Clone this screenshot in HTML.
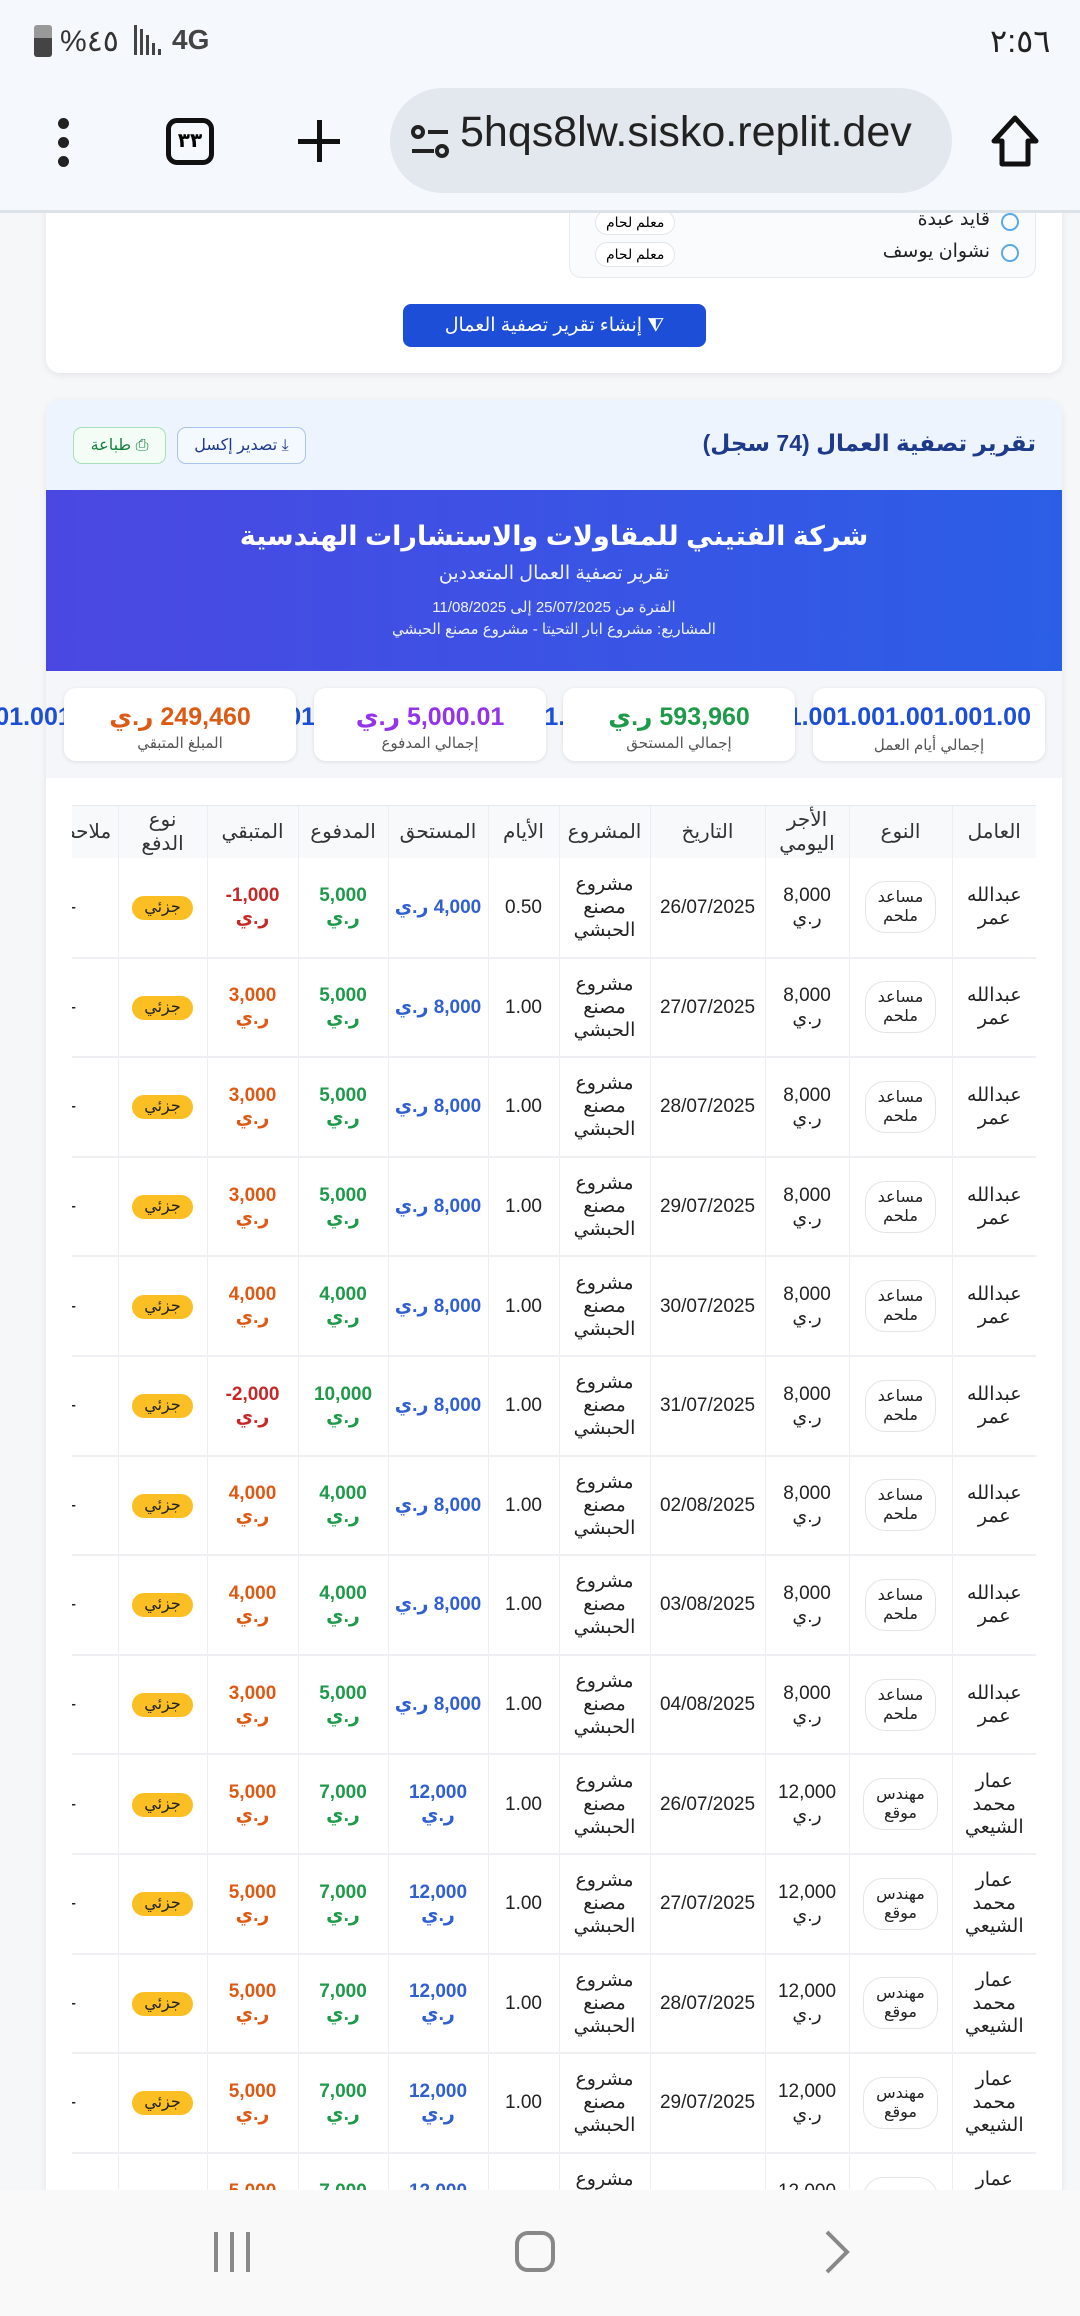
<!DOCTYPE html>
<html lang="ar">
<head>
<meta charset="utf-8">
<style>
*{box-sizing:border-box;margin:0;padding:0}
html,body{width:1080px;height:2316px;overflow:hidden;background:#f6f7f9;font-family:"Liberation Sans","DejaVu Sans",sans-serif;}
.abs{position:absolute}
#status{left:0;top:0;width:1080px;height:213px;background:#f5f8fd;border-bottom:3px solid #dde2e8;z-index:10;overflow:hidden}
.url{left:390px;top:88px;width:562px;height:105px;border-radius:53px;background:#e3e8ef;overflow:hidden}
.card{background:#fff;border-radius:14px;box-shadow:0 2px 8px rgba(0,0,0,.08)}
.rtl{direction:rtl}
table{border-collapse:collapse;table-layout:fixed;direction:rtl}
td,th{text-align:center;vertical-align:middle;font-size:19px;line-height:23px;color:#222;border-left:1px solid #eceef2;}
th{font-weight:normal;color:#333;height:52px;background:#f7f9fb;font-size:20px;line-height:24px}
tr.r td{height:99.6px;border-bottom:2px solid #eef0f4}
.pill{display:inline-block;border:1px solid #e3e5e9;border-radius:20px;padding:6px 12px;font-size:16px;line-height:19px;background:#fff}
.b{font-weight:bold}
.blue{color:#2f5fd0}.green{color:#1f9a4a}.red{color:#c62828}.org{color:#dd5a14}
.badge{display:inline-block;background:#fbbf24;border-radius:13px;padding:2px 12px;font-size:16px;line-height:20px;color:#222}
.stat{position:absolute;top:17px;width:232px;height:73px;background:#fff;border-radius:12px;box-shadow:0 1px 4px rgba(0,0,0,.1);text-align:center}
.stat .v{font-size:25px;font-weight:bold;line-height:30px;margin-top:14px;white-space:nowrap}
.stat .l{font-size:15px;color:#555;line-height:20px;margin-top:2px}
</style>
</head>
<body>
<div id="status" class="abs">
  <div class="abs" style="left:34px;top:25px;width:18px;height:32px;border-radius:3px;background:linear-gradient(#999 0 40%,#444 40%)"></div>
  <div class="abs" style="left:60px;top:24px;font-size:30px;color:#333">%٤٥</div>
  <svg class="abs" style="left:133px;top:25px" width="32" height="32"><g fill="#444"><rect x="1" y="0" width="3" height="30"/><rect x="7" y="4" width="3" height="26"/><rect x="13" y="10" width="3" height="20"/><rect x="19" y="18" width="3" height="12"/><rect x="25" y="24" width="3" height="6"/></g></svg>
  <div class="abs" style="left:172px;top:24px;font-size:28px;font-weight:bold;color:#444">4G</div>
  <div class="abs" style="left:990px;top:22px;font-size:32px;color:#222">٢:٥٦</div>
  <div class="abs" style="left:58px;top:118px;width:11px;height:11px;border-radius:50%;background:#222;box-shadow:0 19px 0 #222,0 38px 0 #222"></div>
  <div class="abs" style="left:166px;top:118px;width:48px;height:47px;border:5px solid #111;border-radius:11px;font-size:20px;text-align:center;line-height:36px;font-weight:bold">٣٣</div>
  <div class="abs" style="left:298px;top:139px;width:42px;height:5px;background:#111"></div>
  <div class="abs" style="left:317px;top:120px;width:5px;height:42px;background:#111"></div>
  <div class="abs url">
    <svg class="abs" style="left:20px;top:37px" width="42" height="34"><g stroke="#222" stroke-width="4" fill="none"><circle cx="8" cy="7" r="5"/><line x1="18" y1="7" x2="38" y2="7"/><circle cx="32" cy="26" r="5"/><line x1="2" y1="26" x2="24" y2="26"/></g></svg>
    <div class="abs" style="left:70px;top:20px;font-size:43px;color:#222;white-space:nowrap">5hqs8lw.sisko.replit.dev</div>
  </div>
  <svg class="abs" style="left:990px;top:115px" width="50" height="52"><path d="M4 26 L25 3 L46 26 L38 26 L38 49 L12 49 L12 26 Z" fill="none" stroke="#111" stroke-width="5" stroke-linejoin="round"/></svg>
</div>

<div class="abs card" style="left:46px;top:150px;width:1016px;height:223px"></div>
<div class="abs" style="left:569px;top:190px;width:467px;height:88px;border:1px solid #e6e9ee;border-top:none;border-radius:0 0 12px 12px;background:#fafbfc"></div>
<div class="abs rtl" style="left:620px;top:208px;width:370px;font-size:19px;text-align:right;color:#222">قايد عبدة</div>
<div class="abs rtl" style="left:620px;top:240px;width:370px;font-size:19px;text-align:right;color:#222">نشوان يوسف</div>
<div class="abs" style="left:1001px;top:213px;width:18px;height:18px;border:2px solid #5aa9e6;border-radius:50%"></div>
<div class="abs" style="left:1001px;top:244px;width:18px;height:18px;border:2px solid #5aa9e6;border-radius:50%"></div>
<div class="abs pill rtl" style="left:595px;top:210px;padding:2px 10px;font-size:14px">معلم لحام</div>
<div class="abs pill rtl" style="left:595px;top:242px;padding:2px 10px;font-size:14px">معلم لحام</div>
<div class="abs rtl" style="left:403px;top:304px;width:303px;height:43px;background:#1d4ed8;border-radius:8px;color:#fff;font-size:19px;line-height:43px;text-align:center">⧩ إنشاء تقرير تصفية العمال</div>

<div class="abs card" style="left:46px;top:400px;width:1016px;height:1900px;overflow:hidden">
  <div class="abs" style="left:0;top:0;width:1016px;height:90px;background:#eef4fd"></div>
  <div class="abs rtl b" style="right:26px;top:30px;font-size:23px;color:#1e3a8a">تقرير تصفية العمال (74 سجل)</div>
  <div class="abs rtl" style="left:131px;top:27px;width:129px;height:37px;border:1px solid #a9c2ee;border-radius:9px;background:#f4f8ff;color:#1e3a8a;font-size:16px;line-height:35px;text-align:center">⤓ تصدير إكسل</div>
  <div class="abs rtl" style="left:27px;top:27px;width:93px;height:37px;border:1px solid #a9e0bb;border-radius:9px;background:#f4fcf6;color:#15803d;font-size:16px;line-height:35px;text-align:center">⎙ طباعة</div>
  <div class="abs rtl" style="left:0;top:90px;width:1016px;height:181px;background:linear-gradient(to left,#2b5ee6,#4b48e2);color:#fff;text-align:center">
    <div class="b" style="font-size:27px;margin-top:28px;line-height:36px">شركة الفتيني للمقاولات والاستشارات الهندسية</div>
    <div style="font-size:19px;margin-top:8px;opacity:.92">تقرير تصفية العمال المتعددين</div>
    <div style="font-size:15px;margin-top:12px;line-height:22px;opacity:.92">الفترة من 25/07/2025 إلى 11/08/2025</div>
    <div style="font-size:15px;line-height:22px;opacity:.92">المشاريع: مشروع ابار التحيتا - مشروع مصنع الحبشي</div>
  </div>
  <div class="abs" style="left:0;top:271px;width:1016px;height:107px;background:#f4f6f9"></div>
</div>

<div class="abs" style="left:0;top:671px;width:1080px;height:107px;overflow:hidden">
<div class="stat" style="left:813px;z-index:1;overflow:visible"><div class="v" style="position:absolute;right:14px;top:0;color:#1d4ed8">1.000.501.001.001.001.001.001.001.001.001.001.001.001.001.001.001.001.001.001.001.001.001.001.001.00</div><div class="l rtl" style="margin-top:48px">إجمالي أيام العمل</div></div>
<div class="stat rtl" style="left:563px;z-index:2"><div class="v green">593,960 ر.ي</div><div class="l">إجمالي المستحق</div></div>
<div class="stat rtl" style="left:314px;z-index:3"><div class="v" style="color:#9333ea">5,000.01 ر.ي</div><div class="l">إجمالي المدفوع</div></div>
<div class="stat rtl" style="left:64px;z-index:4"><div class="v org">249,460 ر.ي</div><div class="l">المبلغ المتبقي</div></div>
</div>

<div class="abs rtl" style="left:72px;top:805px;width:964px;height:1400px;overflow:hidden;border-top:1px solid #e5e8ec">
<table style="width:1008px">
<colgroup><col style="width:84px"><col style="width:103px"><col style="width:84px"><col style="width:115px"><col style="width:91px"><col style="width:71px"><col style="width:100px"><col style="width:90px"><col style="width:91px"><col style="width:89px"><col style="width:90px"></colgroup>
<tr><th>العامل</th><th>النوع</th><th>الأجر<br>اليومي</th><th>التاريخ</th><th>المشروع</th><th>الأيام</th><th>المستحق</th><th>المدفوع</th><th>المتبقي</th><th>نوع<br>الدفع</th><th>ملاحظات</th></tr>
<tr class="r"><td>عبدالله<br>عمر</td><td><span class="pill">مساعد<br>ملحم</span></td><td>8,000<br>ر.ي</td><td>26/07/2025</td><td>مشروع<br>مصنع<br>الحبشي</td><td>0.50</td><td class="b blue">4,000 ر.ي</td><td class="b green">5,000<br>ر.ي</td><td class="b red">1,000-<br>ر.ي</td><td><span class="badge">جزئي</span></td><td>-</td></tr>
<tr class="r"><td>عبدالله<br>عمر</td><td><span class="pill">مساعد<br>ملحم</span></td><td>8,000<br>ر.ي</td><td>27/07/2025</td><td>مشروع<br>مصنع<br>الحبشي</td><td>1.00</td><td class="b blue">8,000 ر.ي</td><td class="b green">5,000<br>ر.ي</td><td class="b org">3,000<br>ر.ي</td><td><span class="badge">جزئي</span></td><td>-</td></tr>
<tr class="r"><td>عبدالله<br>عمر</td><td><span class="pill">مساعد<br>ملحم</span></td><td>8,000<br>ر.ي</td><td>28/07/2025</td><td>مشروع<br>مصنع<br>الحبشي</td><td>1.00</td><td class="b blue">8,000 ر.ي</td><td class="b green">5,000<br>ر.ي</td><td class="b org">3,000<br>ر.ي</td><td><span class="badge">جزئي</span></td><td>-</td></tr>
<tr class="r"><td>عبدالله<br>عمر</td><td><span class="pill">مساعد<br>ملحم</span></td><td>8,000<br>ر.ي</td><td>29/07/2025</td><td>مشروع<br>مصنع<br>الحبشي</td><td>1.00</td><td class="b blue">8,000 ر.ي</td><td class="b green">5,000<br>ر.ي</td><td class="b org">3,000<br>ر.ي</td><td><span class="badge">جزئي</span></td><td>-</td></tr>
<tr class="r"><td>عبدالله<br>عمر</td><td><span class="pill">مساعد<br>ملحم</span></td><td>8,000<br>ر.ي</td><td>30/07/2025</td><td>مشروع<br>مصنع<br>الحبشي</td><td>1.00</td><td class="b blue">8,000 ر.ي</td><td class="b green">4,000<br>ر.ي</td><td class="b org">4,000<br>ر.ي</td><td><span class="badge">جزئي</span></td><td>-</td></tr>
<tr class="r"><td>عبدالله<br>عمر</td><td><span class="pill">مساعد<br>ملحم</span></td><td>8,000<br>ر.ي</td><td>31/07/2025</td><td>مشروع<br>مصنع<br>الحبشي</td><td>1.00</td><td class="b blue">8,000 ر.ي</td><td class="b green">10,000<br>ر.ي</td><td class="b red">2,000-<br>ر.ي</td><td><span class="badge">جزئي</span></td><td>-</td></tr>
<tr class="r"><td>عبدالله<br>عمر</td><td><span class="pill">مساعد<br>ملحم</span></td><td>8,000<br>ر.ي</td><td>02/08/2025</td><td>مشروع<br>مصنع<br>الحبشي</td><td>1.00</td><td class="b blue">8,000 ر.ي</td><td class="b green">4,000<br>ر.ي</td><td class="b org">4,000<br>ر.ي</td><td><span class="badge">جزئي</span></td><td>-</td></tr>
<tr class="r"><td>عبدالله<br>عمر</td><td><span class="pill">مساعد<br>ملحم</span></td><td>8,000<br>ر.ي</td><td>03/08/2025</td><td>مشروع<br>مصنع<br>الحبشي</td><td>1.00</td><td class="b blue">8,000 ر.ي</td><td class="b green">4,000<br>ر.ي</td><td class="b org">4,000<br>ر.ي</td><td><span class="badge">جزئي</span></td><td>-</td></tr>
<tr class="r"><td>عبدالله<br>عمر</td><td><span class="pill">مساعد<br>ملحم</span></td><td>8,000<br>ر.ي</td><td>04/08/2025</td><td>مشروع<br>مصنع<br>الحبشي</td><td>1.00</td><td class="b blue">8,000 ر.ي</td><td class="b green">5,000<br>ر.ي</td><td class="b org">3,000<br>ر.ي</td><td><span class="badge">جزئي</span></td><td>-</td></tr>
<tr class="r"><td>عمار<br>محمد<br>الشيعي</td><td><span class="pill">مهندس<br>موقع</span></td><td>12,000<br>ر.ي</td><td>26/07/2025</td><td>مشروع<br>مصنع<br>الحبشي</td><td>1.00</td><td class="b blue">12,000<br>ر.ي</td><td class="b green">7,000<br>ر.ي</td><td class="b org">5,000<br>ر.ي</td><td><span class="badge">جزئي</span></td><td>-</td></tr>
<tr class="r"><td>عمار<br>محمد<br>الشيعي</td><td><span class="pill">مهندس<br>موقع</span></td><td>12,000<br>ر.ي</td><td>27/07/2025</td><td>مشروع<br>مصنع<br>الحبشي</td><td>1.00</td><td class="b blue">12,000<br>ر.ي</td><td class="b green">7,000<br>ر.ي</td><td class="b org">5,000<br>ر.ي</td><td><span class="badge">جزئي</span></td><td>-</td></tr>
<tr class="r"><td>عمار<br>محمد<br>الشيعي</td><td><span class="pill">مهندس<br>موقع</span></td><td>12,000<br>ر.ي</td><td>28/07/2025</td><td>مشروع<br>مصنع<br>الحبشي</td><td>1.00</td><td class="b blue">12,000<br>ر.ي</td><td class="b green">7,000<br>ر.ي</td><td class="b org">5,000<br>ر.ي</td><td><span class="badge">جزئي</span></td><td>-</td></tr>
<tr class="r"><td>عمار<br>محمد<br>الشيعي</td><td><span class="pill">مهندس<br>موقع</span></td><td>12,000<br>ر.ي</td><td>29/07/2025</td><td>مشروع<br>مصنع<br>الحبشي</td><td>1.00</td><td class="b blue">12,000<br>ر.ي</td><td class="b green">7,000<br>ر.ي</td><td class="b org">5,000<br>ر.ي</td><td><span class="badge">جزئي</span></td><td>-</td></tr>
<tr class="r"><td>عمار<br>محمد<br>الشيعي</td><td><span class="pill">مهندس<br>موقع</span></td><td>12,000<br>ر.ي</td><td>30/07/2025</td><td>مشروع<br>مصنع<br>الحبشي</td><td>1.00</td><td class="b blue">12,000<br>ر.ي</td><td class="b green">7,000<br>ر.ي</td><td class="b org">5,000<br>ر.ي</td><td><span class="badge">جزئي</span></td><td>-</td></tr>
</table>
</div>

<div class="abs" style="left:0;top:2190px;width:1080px;height:126px;background:#f9f9f9;z-index:20">
  <svg class="abs" style="left:210px;top:40px" width="46" height="44"><g stroke="#888" stroke-width="4"><line x1="6" y1="2" x2="6" y2="42"/><line x1="22" y1="2" x2="22" y2="42"/><line x1="38" y1="2" x2="38" y2="42"/></g></svg>
  <div class="abs" style="left:515px;top:41px;width:40px;height:41px;border:4px solid #888;border-radius:13px"></div>
  <svg class="abs" style="left:822px;top:40px" width="30" height="44"><path d="M5 2 L25 22 L5 42" fill="none" stroke="#888" stroke-width="4"/></svg>
</div>
</body>
</html>
